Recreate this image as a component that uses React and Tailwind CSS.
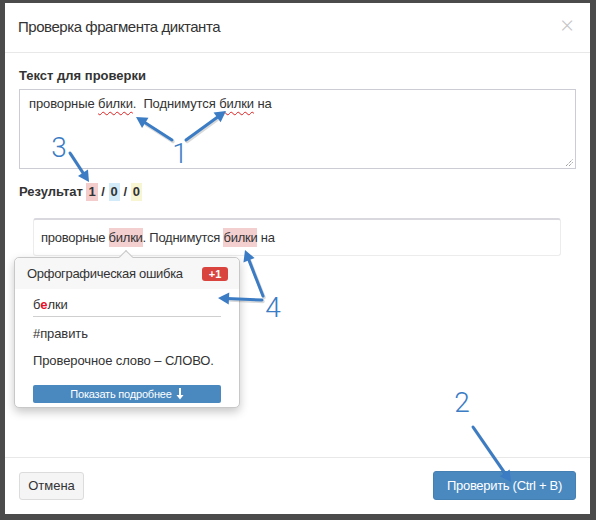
import React from "react";

function Arrow({ x1, y1, x2, y2 }) {
  const dx = x2 - x1;
  const dy = y2 - y1;
  const len = Math.sqrt(dx * dx + dy * dy);
  const ux = dx / len;
  const uy = dy / len;
  const hl = 11;
  const hw = 6;
  const bx = x2 - ux * hl;
  const by = y2 - uy * hl;
  const p1 = `${x2},${y2}`;
  const p2 = `${bx - uy * hw},${by + ux * hw}`;
  const p3 = `${bx + uy * hw},${by - ux * hw}`;
  return (
    <g>
      <line x1={x1 + 1} y1={y1 + 1.5} x2={bx + 1} y2={by + 1.5} stroke="rgba(0,0,0,0.15)" strokeWidth="3.5" strokeLinecap="round" />
      <line x1={x1} y1={y1} x2={bx + ux * 2} y2={by + uy * 2} stroke="#3b7cc4" strokeWidth="3" strokeLinecap="round" />
      <polygon points={`${p1} ${p2} ${p3}`} fill="#3b7cc4" />
    </g>
  );
}

function Annotations() {
  const t = { fontFamily: "Roboto, 'Liberation Sans', sans-serif", fontWeight: 300, fontSize: 28, fill: "#3b7cc4" };
  return (
    <svg className="absolute left-0 top-0 pointer-events-none" width="596" height="520" viewBox="0 0 596 520">
      <Arrow x1={172} y1={140} x2={136} y2={117} />
      <Arrow x1={186} y1={140} x2={226} y2={111} />
      <Arrow x1={70} y1={153} x2={89} y2={182} />
      <Arrow x1={263} y1={296} x2={245} y2={250} />
      <Arrow x1={262} y1={300} x2={218} y2={298} />
      <Arrow x1={473} y1={427} x2={511} y2={482} />
      <text x="180" y="163" textAnchor="middle" style={t}>1</text>
      <text x="59" y="157" textAnchor="middle" style={t}>3</text>
      <text x="273" y="317" textAnchor="middle" style={t}>4</text>
      <text x="462" y="412" textAnchor="middle" style={t}>2</text>
    </svg>
  );
}

export default function App() {
  return (
    <div
      className="relative w-[596px] h-[520px] bg-[#4b4b4b] overflow-hidden pl-[5px] pt-[3px] text-[#333]"
      style={{ fontFamily: "'Liberation Sans', Arial, sans-serif" }}
    >
      <div className="relative w-[585px] h-[511px] bg-white flex flex-col">
        {/* Header */}
        <div className="h-[50px] shrink-0 border-b border-[#e8e8e8] flex items-center justify-between pl-[13px] pr-[16px]">
          <div className="text-[15px] text-[#333] tracking-[-0.45px]">Проверка фрагмента диктанта</div>
          <div className="text-[24px] leading-none text-[#c4c4c4] -mt-[6px]" style={{ fontFamily: "'Open Sans', sans-serif", fontWeight: 300 }}>×</div>
        </div>

        {/* Body */}
        <div className="flex-1 px-[14px] pt-[14px]">
          <div className="text-[13px] font-bold text-[#333] leading-[18px]">Текст для проверки</div>
          <div className="relative mt-[4px] h-[80px] border border-[#ccccd4] px-[9px] py-[5px] text-[13px] leading-[18px] text-[#333] tracking-[-0.1px]">
            проворные{" "}
            <span className="underline decoration-wavy decoration-[#e02020] decoration-1 underline-offset-[3px]">билки</span>.&nbsp;&nbsp;Поднимутся{" "}
            <span className="underline decoration-wavy decoration-[#e02020] decoration-1 underline-offset-[3px]">билки</span> на
            <svg className="absolute right-[2px] bottom-[2px]" width="8" height="8" viewBox="0 0 8 8">
              <line x1="1" y1="8" x2="8" y2="1" stroke="#777" strokeWidth="1" strokeDasharray="1 1" />
              <line x1="4" y1="8" x2="8" y2="4" stroke="#777" strokeWidth="1" strokeDasharray="1 1" />
            </svg>
          </div>

          <div className="mt-[14px] text-[13px] font-bold leading-[18px] flex items-center">
            <span>Результат&nbsp;</span>
            <span className="bg-[#f3cccc] px-[2px]">1</span>
            <span>&nbsp;/&nbsp;</span>
            <span className="bg-[#d3ebf8] px-[2px]">0</span>
            <span>&nbsp;/&nbsp;</span>
            <span className="bg-[#f8f5d3] px-[2px]">0</span>
          </div>

          <div className="mt-[17px] ml-[14px] mr-[15px] h-[38px] border border-[#ececec] border-t-2 border-t-[#d8d8de] rounded-[3px] flex items-center px-[7px] text-[13px] text-[#333] tracking-[-0.25px]">
            <span className="leading-[20px]">
              проворные <span className="bg-[#f3cfcf] py-[2px]">билки</span>. Поднимутся <span className="bg-[#f3cfcf] py-[2px]">билки</span> на
            </span>
          </div>
        </div>

        {/* Footer */}
        <div className="h-[57px] shrink-0 border-t border-[#e8e8e8] flex items-start justify-between px-[14px] pt-[14px]">
          <button className="h-[28px] w-[65px] bg-[#f5f5f5] border border-[#dcdcdc] rounded-[3px] text-[13px] text-[#333] whitespace-nowrap">Отмена</button>
          <button className="h-[29px] -mt-[1px] w-[143px] bg-[#4a89bf] border border-[#4580b3] rounded-[3px] text-[13px] text-white whitespace-nowrap tracking-[-0.3px]">Проверить (Ctrl + B)</button>
        </div>

        {/* Popover */}
        <div className="absolute left-[9px] top-[254px] w-[226px] bg-white border border-[#c8c8c8] rounded-[5px] shadow-[0_4px_10px_rgba(0,0,0,0.22)]">
          <div className="absolute left-[106px] -top-[6px] w-[10px] h-[10px] bg-[#f7f7f7] border-l border-t border-[#c8c8c8] rotate-45"></div>
          <div className="relative h-[31px] bg-[#f7f7f7] rounded-t-[5px] flex items-center justify-between pl-[12px] pr-[11px]">
            <span className="text-[13px] text-[#333] tracking-[-0.3px]">Орфографическая ошибка</span>
            <span className="h-[14px] w-[26px] bg-[#d9443f] rounded-[3px] text-white text-[11px] font-bold leading-[14px] text-center">+1</span>
          </div>
          <div className="px-[18px] pt-[7px] pb-[4px] tracking-[-0.1px]">
            <div className="text-[13px] leading-[18px] pb-[2px] border-b border-[#cfcfcf]">
              б<span className="text-[#e8102a] font-bold">е</span>лки
            </div>
            <div className="text-[13px] leading-[18px] mt-[8px]">#править</div>
            <div className="text-[13px] leading-[18px] mt-[9px]">Проверочное слово – СЛОВО.</div>
            <button className="mt-[15px] w-full h-[18px] bg-[#4a89bf] rounded-[2px] text-white text-[11px] flex items-center justify-center gap-[4px] whitespace-nowrap">
              <span className="tracking-[-0.2px]">Показать подробнее</span>
              <svg width="8" height="12" viewBox="0 0 8 12">
                <rect x="3" y="0" width="2" height="8" fill="white" />
                <polygon points="0.5,7 7.5,7 4,11.5" fill="white" />
              </svg>
            </button>
          </div>
        </div>
      </div>
      <Annotations />
    </div>
  );
}
